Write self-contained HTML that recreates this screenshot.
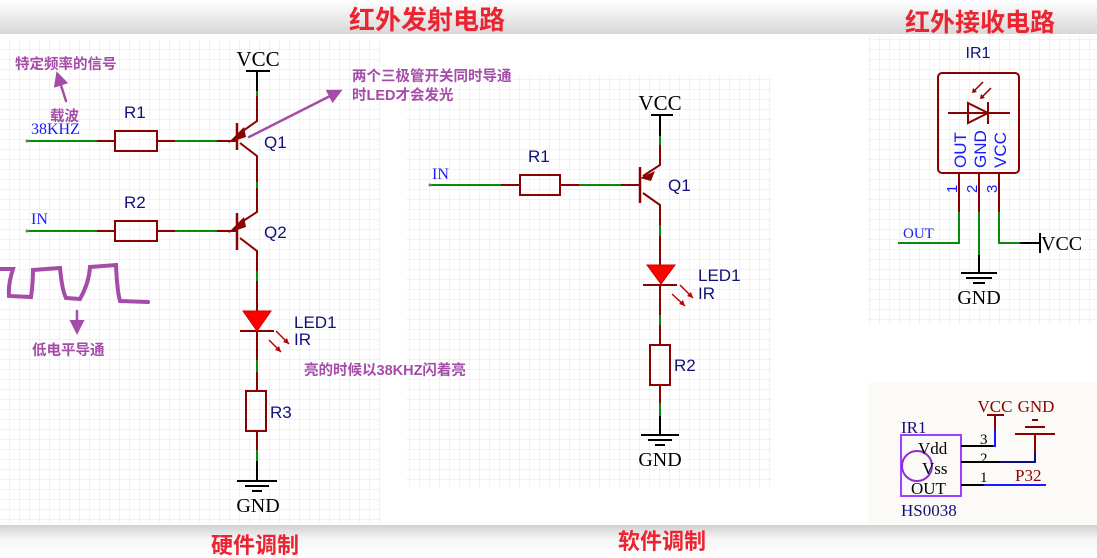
<!DOCTYPE html>
<html><head><meta charset="utf-8"><style>
html,body{margin:0;padding:0;width:1097px;height:558px;overflow:hidden;background:#fff}
svg{display:block}
.cn{font-family:"Liberation Sans","Noto Sans CJK SC",sans-serif;font-weight:bold}
.ser{font-family:"Liberation Serif",serif}
.san{font-family:"Liberation Sans",sans-serif}
</style></head><body>
<svg width="1097" height="558" viewBox="0 0 1097 558" xmlns="http://www.w3.org/2000/svg">
<defs>
<pattern id="g" width="10" height="10" patternUnits="userSpaceOnUse"><path d="M10 0V10H0" fill="none" stroke="#e4e4e4" stroke-width="1"/></pattern>
<linearGradient id="top" x1="0" y1="0" x2="0" y2="1"><stop offset="0" stop-color="#fff"/><stop offset="1" stop-color="#d8d8d8"/></linearGradient>
<linearGradient id="bot" x1="0" y1="0" x2="0" y2="1"><stop offset="0" stop-color="#d0d0d0"/><stop offset="0.4" stop-color="#f4f4f4"/><stop offset="1" stop-color="#fff"/></linearGradient>
<marker id="ah" markerWidth="6" markerHeight="6" refX="4" refY="3" orient="auto"><path d="M0,0 L6,3 L0,6z" fill="#a44ca8"/></marker>
</defs>
<rect x="0" y="0" width="1097" height="34" fill="url(#top)"/>
<rect x="0" y="525" width="1097" height="33" fill="url(#bot)"/>
<rect x="0" y="40" width="380" height="483" fill="url(#g)"/>
<rect x="406" y="75" width="366" height="412" fill="url(#g)"/>
<rect x="868" y="35" width="229" height="290" fill="url(#g)"/>
<rect x="868" y="383" width="229" height="142" fill="#fcfaf6"/>

<!-- titles -->
<text x="427" y="29" text-anchor="middle" class="cn" font-size="26" fill="#ec2330">红外发射电路</text>
<text x="980" y="31" text-anchor="middle" class="cn" font-size="25" fill="#ec2330">红外接收电路</text>
<text x="255" y="553" text-anchor="middle" class="cn" font-size="22" fill="#ec2330">硬件调制</text>
<text x="662" y="549" text-anchor="middle" class="cn" font-size="22" fill="#ec2330">软件调制</text>

<!-- LEFT circuit -->
<g fill="none" stroke-width="2">
<text x="258" y="66" text-anchor="middle" class="ser" font-size="21" fill="#000" stroke="none">VCC</text>
<path d="M246 71H270M257 71V91" stroke="#000"/>
<path d="M257 91V96" stroke="#0a8a0a"/>
<path d="M257 96V121L240 133" stroke="#8b0000"/>
<path d="M237 123V150" stroke="#8b0000" stroke-width="2.5"/>
<path d="M27 141H97" stroke="#0a8a0a"/>
<path d="M97 141H115M157 141H175M217 141H236" stroke="#8b0000"/>
<path d="M175 141H217" stroke="#0a8a0a"/>
<rect x="115" y="131" width="42" height="20" stroke="#8b0000"/>
<path d="M240 143L257 156V182" stroke="#8b0000"/>
<path d="M257 182V188" stroke="#0a8a0a"/>
<path d="M257 188V212L240 223" stroke="#8b0000"/>
<path d="M237 213V250" stroke="#8b0000" stroke-width="2.5"/>
<path d="M27 231H97" stroke="#0a8a0a"/>
<path d="M97 231H115M157 231H175M217 231H236" stroke="#8b0000"/>
<path d="M175 231H217" stroke="#0a8a0a"/>
<rect x="115" y="221" width="42" height="20" stroke="#8b0000"/>
<path d="M240 238L257 251V271" stroke="#8b0000"/>
<path d="M257 271V281" stroke="#0a8a0a"/>
<path d="M257 281V311M257 331V360" stroke="#8b0000"/>
<path d="M257 360V372" stroke="#0a8a0a"/>
<path d="M257 372V391M257 431V450" stroke="#8b0000"/>
<path d="M257 450V461" stroke="#0a8a0a"/>
<path d="M257 461V480" stroke="#000"/>
<path d="M237 481H277M245 486H269M252 491H262" stroke="#000"/>
<rect x="246" y="391" width="20" height="40" stroke="#8b0000"/>
<path d="M240 331H274" stroke="#8b0000"/>
<path d="M276 331L289 344M269 340L281 352" stroke="#c00000" stroke-width="1.5"/>
</g>
<path d="M243 311H271L257 331z" fill="#f00" stroke="#c00" stroke-width="1"/>
<path d="M228 143L244 127L246 137z" fill="#8b0000"/>
<path d="M228 233L244 217L246 227z" fill="#8b0000"/>
<path d="M289 344L283 342L287 338z M281 352L275 350L279 346z" fill="#c00000"/>
<circle cx="27" cy="141" r="1.5" fill="#777"/><circle cx="27" cy="231" r="1.5" fill="#777"/>
<text x="31" y="134" class="ser" font-size="16" fill="#1a1aff">38KHZ</text>
<text x="31" y="224" class="ser" font-size="16" fill="#1a1aff">IN</text>
<g class="san" font-size="17" fill="#10107a">
<text x="124" y="118">R1</text><text x="264" y="148">Q1</text>
<text x="124" y="208">R2</text><text x="264" y="238">Q2</text>
<text x="294" y="328">LED1</text><text x="294" y="345">IR</text>
<text x="270" y="418">R3</text>
</g>
<text x="258" y="512" text-anchor="middle" class="ser" font-size="20" fill="#000">GND</text>

<!-- purple annotations -->
<g class="cn" font-size="14.5" fill="#a44ca8">
<text x="15" y="69">特定频率的信号</text>
<text x="50" y="121">载波</text>
<text x="352" y="81">两个三极管开关同时导通</text>
<text x="352" y="100">时LED才会发光</text>
<text x="32" y="355">低电平导通</text>
<text x="304" y="375">亮的时候以38KHZ闪着亮</text>
</g>
<g stroke="#a44ca8" stroke-width="3" fill="none" stroke-linecap="round">
<path d="M66 101L58 76" marker-end="url(#ah)" stroke-width="2.5"/>
<path d="M249 137L338 92" marker-end="url(#ah)" stroke-width="2.5"/>
<path d="M77 311V330" marker-end="url(#ah)" stroke-width="2.5"/>
<path d="M0 269H13Q8 284 9 296L31 297Q33 283 33 270L60 268Q62 290 66 298L80 299Q89 283 90 267L116 265Q117 290 120 301L148 302" stroke-width="4"/>
</g>

<!-- MIDDLE circuit -->
<g fill="none" stroke-width="2">
<text x="660" y="110" text-anchor="middle" class="ser" font-size="21" fill="#000" stroke="none">VCC</text>
<path d="M651 115H673M660 115V136" stroke="#000"/>
<path d="M660 136V145" stroke="#0a8a0a"/>
<path d="M660 145V165L643 176" stroke="#8b0000"/>
<path d="M640 167V203" stroke="#8b0000" stroke-width="2.5"/>
<path d="M430 185H501" stroke="#0a8a0a"/>
<path d="M501 185H520M560 185H579M621 185H640" stroke="#8b0000"/>
<path d="M579 185H621" stroke="#0a8a0a"/>
<rect x="520" y="175" width="40" height="20" stroke="#8b0000"/>
<path d="M643 193L660 205V225" stroke="#8b0000"/>
<path d="M660 225V236" stroke="#0a8a0a"/>
<path d="M660 236V265M660 285V315" stroke="#8b0000"/>
<path d="M660 315V325" stroke="#0a8a0a"/>
<path d="M660 325V345M660 385V403" stroke="#8b0000"/>
<path d="M660 403V416" stroke="#0a8a0a"/>
<path d="M660 416V435" stroke="#000"/>
<path d="M641 435H679M648 440H672M655 445H665" stroke="#000"/>
<rect x="650" y="345" width="20" height="40" stroke="#8b0000"/>
<path d="M643 285H677" stroke="#8b0000"/>
<path d="M680 285L693 298M672 294L685 306" stroke="#c00000" stroke-width="1.5"/>
</g>
<path d="M647 265H675L661 284z" fill="#f00" stroke="#c00" stroke-width="1"/>
<path d="M640 178L655 171L651 181z" fill="#8b0000"/>
<path d="M693 298L687 296L691 292z M685 306L679 304L683 300z" fill="#c00000"/>
<circle cx="430" cy="185" r="1.5" fill="#777"/>
<text x="432" y="179" class="ser" font-size="16" fill="#1a1aff">IN</text>
<g class="san" font-size="17" fill="#10107a">
<text x="528" y="162">R1</text><text x="668" y="191">Q1</text>
<text x="698" y="281">LED1</text><text x="698" y="299">IR</text>
<text x="674" y="371">R2</text>
</g>
<text x="660" y="466" text-anchor="middle" class="ser" font-size="20" fill="#000">GND</text>

<!-- RIGHT receiver -->
<text x="978" y="58" text-anchor="middle" class="san" font-size="16" fill="#10107a">IR1</text>
<g fill="none" stroke-width="2">
<rect x="938" y="73" width="81" height="100" rx="4" stroke="#8b0000"/>
<path d="M948 113H1010M988 102V124" stroke="#8b0000"/>
<path d="M968 103L988 113L968 123z" stroke="#8b0000"/>
<path d="M983 82L974 91M991 88L982 97" stroke="#8b0000" stroke-width="1.5"/>
<path d="M959 173V212M979 173V212M999 173V212" stroke="#8b0000"/>
<path d="M959 212V243H898M979 212V255M999 212V243H1020" stroke="#0a8a0a"/>
<path d="M979 255V272M1020 243H1040M1040 233V253" stroke="#000"/>
<path d="M961 273H997M966 278H992M973 283H985" stroke="#000"/>
</g>
<path d="M972 93L973 88L977 92z M980 99L981 94L985 98z" fill="#8b0000"/>
<g class="san" font-size="17" fill="#1a1aff">
<text transform="translate(966,168) rotate(-90)">OUT</text>
<text transform="translate(986,168) rotate(-90)">GND</text>
<text transform="translate(1006,168) rotate(-90)">VCC</text>
<text transform="translate(957,193) rotate(-90)" font-size="15">1</text>
<text transform="translate(977,193) rotate(-90)" font-size="15">2</text>
<text transform="translate(997,193) rotate(-90)" font-size="15">3</text>
</g>
<text x="903" y="238" class="ser" font-size="15" fill="#1a1aff">OUT</text>
<text x="1041" y="250" class="ser" font-size="20" fill="#000">VCC</text>
<text x="979" y="304" text-anchor="middle" class="ser" font-size="20" fill="#000">GND</text>

<!-- bottom right -->
<text x="901" y="433" class="ser" font-size="17" fill="#10107a">IR1</text>
<rect x="901" y="435" width="60" height="61" fill="none" stroke="#a040ff" stroke-width="2"/>
<circle cx="917" cy="466" r="15" fill="none" stroke="#8b30d0" stroke-width="2"/>
<g class="ser" font-size="17" fill="#000">
<text x="918" y="454">Vdd</text><text x="922" y="474">Vss</text><text x="911" y="494">OUT</text>
<text x="980" y="444" font-size="15">3</text><text x="980" y="463" font-size="15">2</text><text x="980" y="482" font-size="15">1</text>
</g>
<text x="901" y="516" class="ser" font-size="17" fill="#10107a">HS0038</text>
<text x="995" y="412" text-anchor="middle" class="ser" font-size="17" fill="#8b0000">VCC</text>
<text x="1036" y="412" text-anchor="middle" class="ser" font-size="17" fill="#8b0000">GND</text>
<text x="1015" y="481" class="ser" font-size="17" fill="#8b0000">P32</text>
<g fill="none" stroke-width="2">
<path d="M961 446H993" stroke="#000"/>
<path d="M993 446H995V430" stroke="#1a1aff"/>
<path d="M995 430V415M987 415H1004" stroke="#8b0000"/>
<path d="M961 462H1000" stroke="#000"/>
<path d="M1000 462H1035V452" stroke="#10107a"/>
<path d="M1035 452V434M1015 434H1055M1025 427H1045M1032 420H1038" stroke="#8b0000"/>
<path d="M961 485H984" stroke="#000"/>
<path d="M984 485H1046" stroke="#1a1aff"/>
</g>
</svg>
</body></html>
